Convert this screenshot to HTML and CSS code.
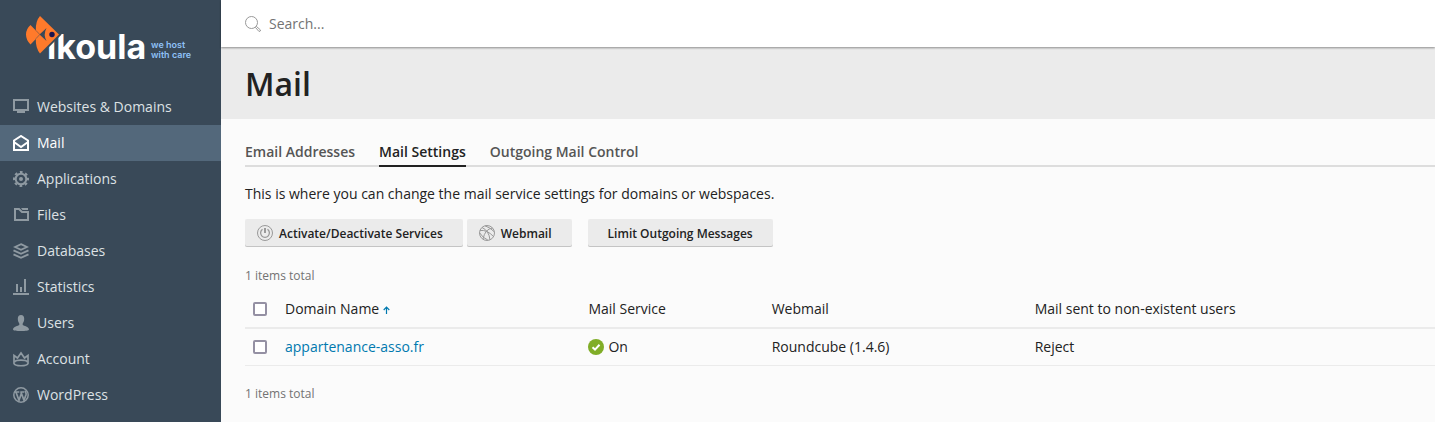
FILE: index.html
```
<!DOCTYPE html>
<html lang="en">
<head>
   <meta charset="UTF-8">
   <meta name="viewport" content="width=device-width, initial-scale=1.0">
   <title>Mail</title>
   <link rel="stylesheet" href="styles.css">
</head>
<body>
   <aside class="sidebar">
      <a class="logo" href="#" aria-label="ikoula">
         <svg width="181" height="72" viewBox="20 8 181 72">
            <text class="logo-name" x="47" y="59">ikoula</text>
            <path d="M40 15.500 L59.500 34.500 L40 54z" fill="#394958" stroke="#394958" stroke-width="3"/>
            <path d="M40 16 L59 34.500 L40 53.500 Q35.500 48 35.800 39 L30.500 44.500 Q26 40 26 34.500 Q26 29 30.500 25 L35.800 30.500 Q35.500 21 40 16z" fill="#ff7a2b"/>
            <path d="M35.800 30.300 L39.800 34.500 L35.800 38.800" fill="none" stroke="#394958" stroke-width=".5"/>
            <path d="M39.500 34.500 L46.500 28 Q43 34.500 46.500 41z" fill="#394958"/>
            <circle cx="52" cy="34.500" r="2.700" fill="#1c1450"/>
            <text class="logo-tag" x="151" y="48">we host</text>
            <text class="logo-tag" x="151" y="58">with care</text>
         </svg>
      </a>
      <nav class="menu">
         <a class="menu-item" href="#">
            <svg class="icon" viewBox="0 0 16 16"><path d="M1 1h14v10H1z" fill="none" stroke="currentColor" stroke-width="2"/><path d="M4 12h8v2H4z"/></svg>
            Websites &amp; Domains
         </a>
         <a class="menu-item active" href="#">
            <svg class="icon" viewBox="0 0 16 16"><path d="M1 5.500L8 1l7 4.500V15H1zM1 7l7 5 7-5" fill="none" stroke="currentColor" stroke-width="2"/></svg>
            Mail
         </a>
         <a class="menu-item" href="#">
            <svg class="icon" viewBox="0 0 16 16"><circle cx="8" cy="8" r="5.300" fill="none" stroke="currentColor" stroke-width="2"/><circle cx="8" cy="8" r="7" fill="none" stroke="currentColor" stroke-width="2" stroke-dasharray="2.750 2.750" stroke-dashoffset="1.370"/><circle cx="8" cy="8" r="2"/></svg>
            Applications
         </a>
         <a class="menu-item" href="#">
            <svg class="icon" viewBox="0 0 16 16"><path d="M2 2h4l3 3h6v8H2z" fill="none" stroke="currentColor" stroke-width="2"/><path d="M8 1h7v2H9.500z"/></svg>
            Files
         </a>
         <a class="menu-item" href="#">
            <svg class="icon" viewBox="0 0 16 16"><path d="M8 1.200l6 2.800-6 2.800L2 4zM.5 7.300L8 10.800l7.500-3.500M.5 11.300L8 14.800l7.500-3.500" fill="none" stroke="currentColor" stroke-width="1.900"/></svg>
            Databases
         </a>
         <a class="menu-item" href="#">
            <svg class="icon" viewBox="0 0 16 16"><path d="M0 14h16v2H0zM3 5h2v8H3zM7 8h2v5H7zM11 0h2v13h-2z"/></svg>
            Statistics
         </a>
         <a class="menu-item" href="#">
            <svg class="icon" viewBox="0 0 16 16"><path d="M8 0c2.200 0 3.200 1.600 3.200 3.800 0 2-.7 3.800-1.500 4.600v1.500c1 1 6.300 1.400 6.300 4.600 0 1-3.500 1.500-8 1.500s-8-.5-8-1.500c0-3.200 5.300-3.600 6.300-4.600V8.400C5.500 7.600 4.800 5.800 4.800 3.800 4.800 1.600 5.800 0 8 0z"/></svg>
            Users
         </a>
         <a class="menu-item" href="#">
            <svg class="icon" viewBox="0 0 16 16"><path d="M1 4.500v8c1 3 13 3 14 0v-8L11.500 7 8 2 4.500 7z" fill="none" stroke="currentColor" stroke-width="1.700"/><path d="M1.500 11c1.500-2.500 11.500-2.500 13 0" fill="none" stroke="currentColor" stroke-width="1.700"/></svg>
            Account
         </a>
         <a class="menu-item" href="#">
            <svg class="icon" viewBox="0 0 16 16"><circle cx="8" cy="8" r="7.200" fill="none" stroke="currentColor" stroke-width="1.500"/><path d="M1.800 5h4.500M7.300 5h4M3 5.200l3 8 2.300-6.500M8 5.200l3 8 2-5.500c.5-2-.8-2.500-.5-4" fill="none" stroke="currentColor" stroke-width="1.700"/></svg>
            WordPress
         </a>
      </nav>
   </aside>
   <div class="page">
      <header class="topbar">
         <label for="search" aria-label="Search">
            <svg class="icon" viewBox="0 0 16 16" fill="none" stroke="currentColor"><circle cx="6.500" cy="6.500" r="6"/><path d="M10.500 11.500l1-1 4 3.500q.3 1.300-1.500 1.500z"/></svg>
         </label>
         <input type="text" id="search" class="search" placeholder="Search...">
      </header>
      <div class="page-title">
         <h1>Mail</h1>
      </div>
      <main class="content">
         <nav class="tabs">
            <a class="tab" href="#">Email Addresses</a>
            <a class="tab active" href="#">Mail Settings</a>
            <a class="tab" href="#">Outgoing Mail Control</a>
         </nav>
         <p class="hint">This is where you can change the mail service settings for domains or webspaces.</p>
         <div class="toolbar">
            <div class="btn-group">
               <button type="button" class="btn btn-icon">
                  <svg class="icon" viewBox="0 0 16 16" fill="none" stroke="currentColor"><circle cx="8" cy="8" r="7.500"/><path d="M5.500 4.300a4.400 4.400 0 1 0 5 0" stroke-width="1.300"/><path d="M8 3v5" stroke-width="2"/></svg>
                  Activate/Deactivate Services
               </button>
               <button type="button" class="btn btn-icon">
                  <svg class="icon" viewBox="0 0 16 16" fill="none" stroke="currentColor"><circle cx="8" cy="8" r="7.500"/><path d="M1 5.500q7-1 13.500 6M3 2.500q7 3 8 12.500M13.500 3q-7.500 1-9.500 11M6 .8q5 1.500 9.300 6M.8 8q3 5 8 7"/></svg>
                  Webmail
               </button>
            </div>
            <button type="button" class="btn">Limit Outgoing Messages</button>
         </div>
         <div class="total">1 items total</div>
         <table class="list">
            <thead>
               <tr>
                  <th class="col-check"><input type="checkbox" aria-label="Select all"></th>
                  <th class="col-name">Domain Name <svg class="sort" width="7" height="8" viewBox="0 0 7 8"><path d="M3.500 8V1.500M.7 4l2.800-2.800L6.300 4" fill="none" stroke="currentColor" stroke-width="1.200"/></svg></th>
                  <th class="col-service">Mail Service</th>
                  <th class="col-webmail">Webmail</th>
                  <th>Mail sent to non-existent users</th>
               </tr>
            </thead>
            <tbody>
               <tr>
                  <td><input type="checkbox" aria-label="Select appartenance-asso.fr"></td>
                  <td><a href="#">appartenance-asso.fr</a></td>
                  <td>
                     <div class="status">
                        <svg class="icon" viewBox="0 0 16 16"><circle cx="8" cy="8" r="8" fill="#80ad27"/><path d="M4.500 8.300l2.500 2.300 4.500-4.800" fill="none" stroke="#fff" stroke-width="2"/></svg>
                        On
                     </div>
                  </td>
                  <td>Roundcube (1.4.6)</td>
                  <td>Reject</td>
               </tr>
            </tbody>
         </table>
         <div class="total">1 items total</div>
      </main>
   </div>
</body>
</html>
```
FILE: styles.css
```
* {
   box-sizing: border-box;
}

body {
   margin: 0;
   display: flex;
   min-height: 100vh;
   font-family: "Open Sans", sans-serif;
   font-size: 14px;
   line-height: 20px;
   color: #222222;
   background-color: #fbfbfb;
}

.icon {
   width: 16px;
   height: 16px;
   flex: none;
   display: block;
   fill: currentColor;
}

.icon[fill="none"] {
   fill: none;
}

.sidebar {
   width: 221px;
   flex: none;
   background: #394958;
}

.logo {
   display: block;
   height: 89px;
   padding: 8px 20px;
}

.logo svg {
   display: block;
   overflow: visible;
}

.logo-name {
   font-family: Inter, sans-serif;
   font-size: 34px;
   font-weight: 700;
   fill: #ffffff;
}

.logo-tag {
   font-family: Inter, sans-serif;
   font-size: 9px;
   font-weight: 600;
   fill: #8fc1f7;
}

.menu-item {
   display: flex;
   align-items: center;
   gap: 8px;
   height: 36px;
   padding: 0 13px;
   color: #dde1e4;
   text-decoration: none;
}

.menu-item .icon {
   color: #8f9aa2;
}

.menu-item.active {
   background: #53687b;
   color: #ffffff;
}

.menu-item.active .icon {
   color: #ffffff;
}

.page {
   flex: 1;
   min-width: 0;
}

.topbar {
   position: relative;
   display: flex;
   align-items: center;
   gap: 8px;
   height: 47px;
   padding: 0 24px;
   background: #ffffff;
   box-shadow: 0 1px 2px rgba(0, 0, 0, 0.4);
   color: #999999;
}

.search {
   flex: 1;
   border: none;
   outline: none;
   padding: 0;
   font: inherit;
   color: #222222;
   background: none;
}

.search::placeholder {
   color: #737373;
   opacity: 1;
}

.page-title {
   padding: 17px 24px 15px;
   background: #ebebeb;
}

h1 {
   margin: 0;
   font-size: 32px;
   line-height: 40px;
   font-weight: 600;
}

.content {
   padding: 23px 0 0 24px;
}

.tabs {
   display: flex;
   gap: 24px;
   border-bottom: 2px solid #dddddd;
}

.tab {
   margin-bottom: -2px;
   padding-bottom: 3px;
   border-bottom: 2px solid transparent;
   font-weight: 600;
   color: #555555;
   text-decoration: none;
}

.tab.active {
   color: #222222;
   border-color: #222222;
}

.hint {
   margin: 17px 0 15px;
}

.toolbar {
   display: flex;
   gap: 16px;
   margin-bottom: 19px;
}

.btn-group {
   display: flex;
   gap: 4px;
}

.btn {
   display: flex;
   align-items: center;
   gap: 6px;
   height: 28px;
   padding: 0 20px;
   border: none;
   border-radius: 2px;
   background: #ebebeb;
   box-shadow: inset 0 -1px 0 #c4c4c4;
   font-family: inherit;
   font-size: 12px;
   font-weight: 600;
   color: #222222;
   cursor: pointer;
}

.btn-icon {
   padding-left: 12px;
}

.btn .icon {
   color: #999999;
}

.total {
   font-size: 12px;
   color: #737373;
}

.list {
   width: 100%;
   margin: 4px 0 18px;
   table-layout: fixed;
   border-collapse: separate;
   border-spacing: 0;
}

.list th,
.list td {
   height: 37px;
   padding: 0;
   text-align: left;
   font-weight: 400;
   border-bottom: 1px solid #ebebeb;
}

.list th {
   height: 39px;
   border-bottom-width: 2px;
}

.col-check {
   width: 40px;
}

.col-name {
   width: 25.5%;
}

.col-service {
   width: 15.4%;
}

.col-webmail {
   width: 22.1%;
}

.list a,
.sort {
   color: #0079af;
   text-decoration: none;
}

.list input {
   appearance: none;
   display: block;
   width: 14px;
   height: 14px;
   margin: 0 8px;
   border: 2px solid #9490a3;
   border-radius: 2px;
   background: #ffffff;
}

.list input:checked {
   background: #0079af;
}

.status {
   display: flex;
   align-items: center;
   gap: 4px;
}
```
